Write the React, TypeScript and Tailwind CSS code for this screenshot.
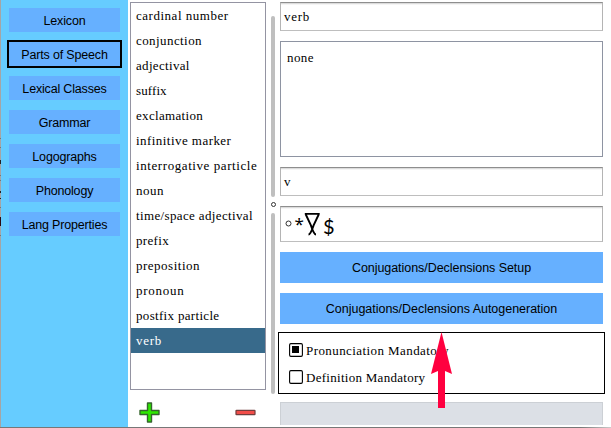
const navItems = [
  { label: 'Lexicon', active: false },
  { label: 'Parts of Speech', active: true },
  { label: 'Lexical Classes', active: false },
  { label: 'Grammar', active: false },
  { label: 'Logographs', active: false },
  { label: 'Phonology', active: false },
  { label: 'Lang Properties', active: false },
];

const parts = [
  { name: 'cardinal number', spacing: 'tracking-[0.52px]' },
  { name: 'conjunction', spacing: 'tracking-[0.42px]' },
  { name: 'adjectival', spacing: 'tracking-[0.32px]' },
  { name: 'suffix', spacing: 'tracking-[0.1px]' },
  { name: 'exclamation', spacing: 'tracking-[0.32px]' },
  { name: 'infinitive marker', spacing: 'tracking-[0.45px]' },
  { name: 'interrogative particle', spacing: 'tracking-[0.58px]' },
  { name: 'noun', spacing: 'tracking-[0.5px]' },
  { name: 'time/space adjectival', spacing: 'tracking-[0.36px]' },
  { name: 'prefix', spacing: 'tracking-[0.32px]' },
  { name: 'preposition', spacing: 'tracking-[0.5px]' },
  { name: 'pronoun', spacing: 'tracking-[0.75px]' },
  { name: 'postfix particle', spacing: 'tracking-[0.32px]' },
  { name: 'verb', spacing: 'tracking-[0.7px]' },
];

// Dark fragments along the window's left edge: [top, height, colour]
const edgeMarks: [number, number, string][] = [
  [138, 1, '#777'],
  [147, 1, '#777'],
  [160, 4, '#222'],
  [175, 1, '#777'],
  [180, 1, '#777'],
  [191, 2, '#222'],
  [198, 1, '#222'],
  [207, 1, '#777'],
  [217, 9, '#2a0a10'],
  [235, 1, '#777'],
];

const serif = "font-['Liberation_Serif',serif] text-[13px] [font-variant-ligatures:none]";
const sans = "font-['Liberation_Sans',sans-serif]";
const field = 'border border-t-[#8e8e8e] border-x-[#b4b4b4] border-b-[#bebebe] bg-white shadow-[inset_0_1px_0_#dcdcdc,inset_0_2px_0_#f5f5f5]';

function Sidebar() {
  return (
    <nav className="relative flex w-32 shrink-0 flex-col gap-2.5 border-l border-[#a5a5a5] bg-[#66ccff] pl-2 pt-2">
      {navItems.map((item) => (
        <button
          key={item.label}
          className={`${sans} h-6 w-[111px] shrink-0 bg-[#66b0ff] pt-0.5 text-[12.5px] leading-[22px] tracking-[-0.17px] text-black ${item.active ? 'outline-2 outline-black' : ''}`}
        >
          {item.label}
        </button>
      ))}
      {edgeMarks.map(([top, height, color]) => (
        <span key={top} className="absolute -left-px w-px" style={{ top, height, background: color }} />
      ))}
    </nav>
  );
}

function PartsList() {
  return (
    <div className="ml-0.5 flex w-[136px] shrink-0 flex-col pt-0.5">
      <ul className={`${serif} h-[388px] border border-[#9494a2] bg-white`}>
        {parts.map((p) => (
          <li
            key={p.name}
            className={`h-[25px] whitespace-nowrap pl-[5px] leading-[26px] ${p.spacing} ${p.name === 'verb' ? 'bg-[#386a8b] text-white' : 'text-black'}`}
          >
            {p.name}
          </li>
        ))}
      </ul>
      <div className="flex h-[37px] items-center justify-between pl-[9px] pr-2.5 pt-[7px]">
        <svg width="21" height="21" viewBox="0 0 21 21">
          <path d="M8.5 1h4v7.5H20v4h-7.5V20h-4v-7.5H1v-4h7.5z" fill="#2ee800" stroke="#35652d" strokeWidth="1.4" strokeLinejoin="round" />
        </svg>
        <svg width="21" height="21" viewBox="0 0 21 21">
          <rect x="1" y="8.3" width="19" height="4.4" rx=".5" fill="#f14d49" stroke="#713d3d" strokeWidth="1.2" />
        </svg>
      </div>
    </div>
  );
}

function Splitter() {
  return (
    <div className="ml-[5px] flex w-[5px] shrink-0 flex-col pt-4">
      <div className="h-[181px] w-1 rounded-full bg-[#bfbfbf]" />
      <div className="mb-1.5 mt-[5px] size-[5px] shrink-0 rounded-full border border-[#333]" />
      <div className="h-[181px] w-1 rounded-full bg-[#bfbfbf]" />
    </div>
  );
}

function Check({ label, checked, spacing }: { label: string; checked: boolean; spacing: string }) {
  return (
    <label className="flex h-[27px] items-center">
      <svg width="14" height="14" viewBox="0 0 14 14" className="mr-[3px] shrink-0">
        <rect x=".6" y=".6" width="12.8" height="12.8" rx="1.3" fill="white" stroke="black" strokeWidth="1.1" />
        {checked && <rect x="3" y="3" width="7" height="7" fill="black" />}
      </svg>
      <span className={`${serif} ${spacing} whitespace-nowrap pt-px`}>{label}</span>
    </label>
  );
}

function Details() {
  return (
    <main className="ml-1 flex w-[323px] shrink-0 flex-col pt-0.5">
      <div className={`${field} ${serif} h-[29px] shrink-0 pl-[3px] leading-[28px] tracking-[0.7px]`}>verb</div>
      <div className={`${serif} mt-2.5 h-[116px] shrink-0 border border-[#8e94a2] pl-1.5 pt-[7px] leading-[17px] tracking-[0.4px]`}>none</div>
      <div className={`${field} ${serif} mt-2.5 h-[29px] shrink-0 pl-[3px] leading-[28px]`}>v</div>
      <div className={`${field} mt-2.5 flex h-9 shrink-0 pl-1`}>
        <svg width="51" height="34" viewBox="285 207 51 34" fill="none" stroke="black">
          <circle cx="288.5" cy="223.5" r="2.5" strokeWidth=".8" />
          <path d="M304.8 213.9h14.9M305.8 214.5l5 10.500c1 3 3 9.500 5.200 9.500M318.700 214.500l-5 10.500c-1 3-3 9.500-5.200 9.500" strokeWidth="1.900" />
          <text x="294.500" y="230" fontSize="17" fill="black" stroke="none" className="font-['Noto_Sans',sans-serif]">*</text>
          <text x="323" y="234" fontSize="20" fill="black" stroke="none" className="font-['Lato',sans-serif]">$</text>
        </svg>
      </div>
      <button className={`${sans} mt-2.5 h-[31px] shrink-0 bg-[#66b0ff] pt-0.5 text-[12.5px] tracking-[-0.05px] text-black`}>Conjugations/Declensions Setup</button>
      <button className={`${sans} mt-2.5 h-[31px] shrink-0 bg-[#66b0ff] pt-0.5 text-[12.5px] tracking-[-0.02px] text-black`}>Conjugations/Declensions Autogeneration</button>
      <div className="relative -mx-0.5 mt-2 h-[62px] shrink-0 border border-black pl-2.5 pt-[3.5px]">
        <Check label="Pronunciation Mandatory" checked spacing="tracking-[0.42px]" />
        <Check label="Definition Mandatory" checked={false} spacing="tracking-[0.28px]" />
        <svg className="absolute left-[152px] top-[-1px]" width="22" height="76" viewBox="0 0 22 76">
          <path d="M10.500 0L21 42l-7-3v37H7V39l-7 3z" fill="#ff003f" />
        </svg>
      </div>
      <div className="mt-2 h-[23px] shrink-0 border border-b-0 border-[#ccd0d5] bg-[#dce0e6]" />
    </main>
  );
}

export default function App() {
  return (
    <div className="flex h-[428px] w-[611px] flex-col overflow-hidden bg-white">
      <div className="flex h-[427px]">
        <Sidebar />
        <PartsList />
        <Splitter />
        <Details />
      </div>
      <div className="h-px w-full bg-gradient-to-r from-[#777] from-95% to-[#ccc]" />
    </div>
  );
}
